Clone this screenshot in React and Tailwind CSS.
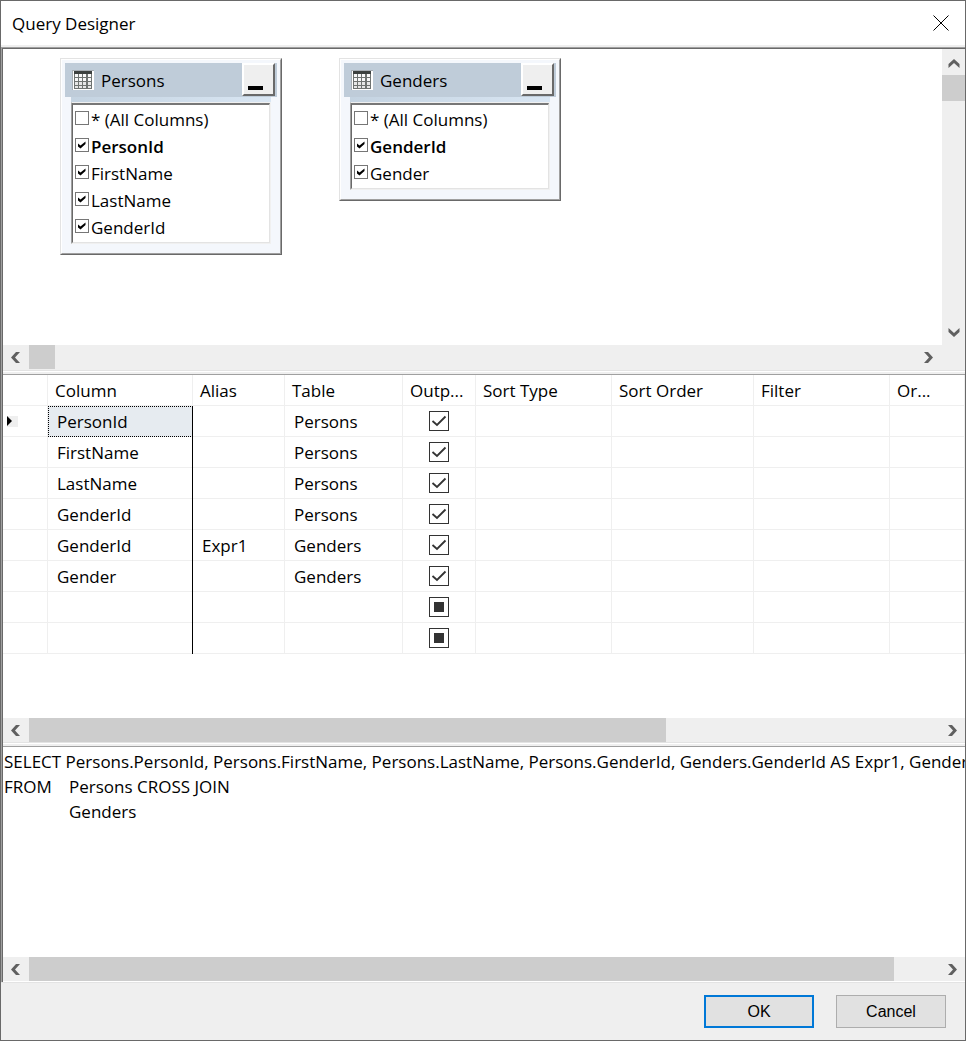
import React from "react";

const tables = [
  {
    name: "Persons",
    columns: [
      { name: "* (All Columns)", checked: false },
      { name: "PersonId", checked: true, bold: true },
      { name: "FirstName", checked: true },
      { name: "LastName", checked: true },
      { name: "GenderId", checked: true },
    ],
  },
  {
    name: "Genders",
    columns: [
      { name: "* (All Columns)", checked: false },
      { name: "GenderId", checked: true, bold: true },
      { name: "Gender", checked: true },
    ],
  },
];

const headers = [
  { label: "", width: "w-[45px]" },
  { label: "Column", width: "w-[145px]" },
  { label: "Alias", width: "w-[92px]" },
  { label: "Table", width: "w-[118px]" },
  { label: "Outp...", width: "w-[73px]" },
  { label: "Sort Type", width: "w-[136px]" },
  { label: "Sort Order", width: "w-[142px]" },
  { label: "Filter", width: "w-[136px]" },
  { label: "Or...", width: "" },
];

const rows = [
  { column: "PersonId", alias: "", table: "Persons", output: true },
  { column: "FirstName", alias: "", table: "Persons", output: true },
  { column: "LastName", alias: "", table: "Persons", output: true },
  { column: "GenderId", alias: "", table: "Persons", output: true },
  { column: "GenderId", alias: "Expr1", table: "Genders", output: true },
  { column: "Gender", alias: "", table: "Genders", output: true },
  { column: "", alias: "", table: "", output: false },
  { column: "", alias: "", table: "", output: false },
];

const sql =
  "SELECT Persons.PersonId, Persons.FirstName, Persons.LastName, Persons.GenderId, Genders.GenderId AS Expr1, Genders.Gender\n" +
  "FROM\tPersons CROSS JOIN\n" +
  "\tGenders";

const arrows = {
  left: "M10 1H6L1 6.5L6 12H10L5 6.5Z",
  right: "M2 1H6L11 6.5L6 12H2L7 6.5Z",
  up: "M0.500 12V8L6 3L11.500 8V12L6 7Z",
  down: "M0.500 2V6L6 11L11.500 6V2L6 7Z",
};

const ArrowButton = ({ dir }) => (
  <button
    type="button"
    aria-label={`Scroll ${dir}`}
    className="flex h-6 w-[26px] shrink-0 items-center justify-center"
  >
    <svg width="12" height="13" viewBox="0 0 12 13" fill="#606060">
      <path d={arrows[dir]} />
    </svg>
  </button>
);

const HScroll = ({ thumb }) => (
  <div className="flex h-6 min-w-0 grow bg-[#efefef]">
    <ArrowButton dir="left" />
    <div className="grow">
      <div className={`h-6 bg-[#cdcdcd] ${thumb}`} />
    </div>
    <ArrowButton dir="right" />
  </div>
);

const Splitter = () => (
  <div className="h-[5px] shrink-0 border-t border-b border-t-[#e3e3e3] border-b-[#a0a0a0] bg-[#efefef]">
    <div className="h-px bg-white" />
  </div>
);

const TableIcon = () => (
  <svg width="22" height="20" viewBox="0 0 22 20" shapeRendering="crispEdges">
    <rect width="22" height="20" fill="#a6adb3" />
    <rect x="1" y="1" width="21" height="19" fill="#fff" />
    <rect x="2" y="1" width="18" height="18" fill="#6f7371" />
    <rect x="2" y="1" width="18" height="3" fill="#3c403e" />
    {[4, 8, 12, 16].map((y) =>
      [3, 7, 11, 16].map((x) => (
        <rect
          key={`${x}-${y}`}
          x={x}
          y={y}
          width="3"
          height={y === 16 ? 2 : 3}
          fill={y > 8 ? "#e6e6e6" : "#f8f8f8"}
        />
      ))
    )}
  </svg>
);

const TableCard = ({ table }) => (
  <section className="w-[222px] border border-t-[#e3e3e3] border-r-[#696969] border-b-[#696969] border-l-[#e3e3e3]">
    <div className="border border-t-white border-r-[#a0a0a0] border-b-[#a0a0a0] border-l-white bg-[#f4f7fc] px-[3px] pt-[3px] pb-[9px]">
      <div className="flex h-[34px] items-start bg-[#bfccd9] pr-0.5 pl-[7px]">
        <div className="flex h-[34px] grow items-center gap-[7px]">
          <TableIcon />
          <h2>{table.name}</h2>
        </div>
        <button
          type="button"
          aria-label={`Minimize ${table.name}`}
          className="flex h-[33px] w-[33px] items-end border-2 border-t-white border-r-[#696969] border-b-[#696969] border-l-white bg-[#efefef] pb-1 pl-1"
        >
          <span className="h-1 w-[15px] bg-black" />
        </button>
      </div>
      <div className="mx-1.5 h-[5px] bg-linear-to-r from-[#c4d3e1] to-[#d9e6f3]" />
      <div className="mx-1.5 border border-t-[#f0f0f0] border-r-[#f0f0f0] border-b-[#f0f0f0] border-l-[#a0a0a0]">
        <ul className="border border-t-2 border-t-[#777777] border-r-[#e3e3e3] border-b-[#e3e3e3] border-l-[#696969] bg-white pt-px pb-px pl-0.5">
          {table.columns.map((col) => (
            <li key={col.name}>
              <label className="flex h-[27px] items-center gap-0.5">
                <span className="mb-1 grid">
                  <input
                    type="checkbox"
                    defaultChecked={col.checked}
                    className="peer col-start-1 row-start-1 h-3.5 w-3.5 appearance-none border border-[#767676] bg-white"
                  />
                  <svg
                    viewBox="0 0 14 14"
                    fill="#000"
                    className="pointer-events-none invisible col-start-1 row-start-1 h-3.5 w-3.5 peer-checked:visible"
                  >
                    <path d="M3 5.500L5.500 7.500L10.500 3.500V6L5.500 10.500L3 8.500Z" />
                  </svg>
                </span>
                <span className={col.bold ? "font-semibold" : ""}>
                  {col.name}
                </span>
              </label>
            </li>
          ))}
        </ul>
      </div>
    </div>
  </section>
);

const OutputCheckbox = ({ checked, label }) => (
  <span className="mx-auto grid w-5">
    <input
      type="checkbox"
      aria-label={label}
      defaultChecked={checked}
      className="col-start-1 row-start-1 h-5 w-5 appearance-none border border-[#333333] bg-white"
    />
    <svg
      viewBox="0 0 20 20"
      className="pointer-events-none col-start-1 row-start-1 h-5 w-5"
    >
      {checked ? (
        <path
          d="M3.500 10L8 14L16.500 5.500"
          fill="none"
          stroke="#333333"
          strokeWidth="1.8"
        />
      ) : (
        <rect x="5" y="5" width="10" height="10" fill="#333333" />
      )}
    </svg>
  </span>
);

const cell = "h-[31px] border-r border-b border-[#efefef] p-0 pl-[9px]";

const App = () => {
  return (
    <div className="flex h-screen min-h-[800px] flex-col overflow-hidden border border-[#696969] bg-[#efefef] font-['Open_Sans','Noto_Sans',sans-serif] text-[17px] leading-[25px] text-black">
      <header className="flex h-11 shrink-0 items-center justify-between bg-white pr-4 pl-[11px]">
        <h1>Query Designer</h1>
        <button type="button" aria-label="Close">
          <svg width="16" height="16" viewBox="0 0 16 16" stroke="#000">
            <path d="M0.500 0.500L15.500 15.500M15.500 0.500L0.500 15.500" />
          </svg>
        </button>
      </header>

      <main className="mt-0.5 flex min-h-0 grow flex-col border-t border-l border-[#a0a0a0]">
        <div className="flex min-h-0 grow flex-col border-t border-l border-[#696969] bg-white">
          {/* diagram */}
          <div className="flex min-h-0 flex-[326] flex-col bg-[#efefef]">
            <div className="flex min-h-0 grow">
              <div className="flex grow items-start gap-[57px] overflow-hidden bg-white pt-[9px] pl-[57px]">
                {tables.map((table) => (
                  <TableCard key={table.name} table={table} />
                ))}
              </div>
              <div className="flex w-[23px] shrink-0 flex-col items-center bg-[#efefef]">
                <div className="flex h-[26px] items-center">
                  <ArrowButton dir="up" />
                </div>
                <div className="w-full grow">
                  <div className="h-[26px] bg-[#cdcdcd]" />
                </div>
                <div className="flex h-[26px] items-center">
                  <ArrowButton dir="down" />
                </div>
              </div>
            </div>
            <div className="mb-px flex pr-6">
              <HScroll thumb="w-[26px]" />
            </div>
            <Splitter />
          </div>

          {/* criteria grid */}
          <div className="flex min-h-0 flex-[372] flex-col">
            <div className="min-h-0 grow overflow-hidden">
              <table className="w-full table-fixed border-separate border-spacing-0 text-left">
                <thead>
                  <tr>
                    {headers.map((h) => (
                      <th
                        key={h.label}
                        className={`h-[31px] border-r border-b border-[#efefef] p-0 pl-[7px] font-normal whitespace-nowrap ${h.width}`}
                      >
                        {h.label}
                      </th>
                    ))}
                  </tr>
                </thead>
                <tbody>
                  {rows.map((row, idx) => (
                    <tr key={idx}>
                      <td className="h-[31px] border-r border-b border-[#efefef] p-0 pl-1">
                        {idx === 0 && (
                          <div className="flex h-[11px] w-[11px] items-center bg-[#efefef]">
                            <svg width="5" height="10" viewBox="0 0 5 10">
                              <path d="M0 0L5 5L0 10Z" />
                            </svg>
                          </div>
                        )}
                      </td>
                      <td
                        className={
                          idx === 0
                            ? "h-[31px] border border-dotted border-black bg-[#e6ebf0] p-0 pl-2 [border-right-style:solid]"
                            : "h-[31px] p-0 pl-[9px] shadow-[inset_-1px_0_0_#000,inset_0_-1px_0_#efefef]"
                        }
                      >
                        {row.column}
                      </td>
                      <td className={cell}>{row.alias}</td>
                      <td className={cell}>{row.table}</td>
                      <td className="h-[31px] border-r border-b border-[#efefef] p-0">
                        <OutputCheckbox
                          checked={row.output}
                          label={`Output row ${idx + 1}`}
                        />
                      </td>
                      <td className={cell}></td>
                      <td className={cell}></td>
                      <td className={cell}></td>
                      <td className={cell}></td>
                    </tr>
                  ))}
                </tbody>
              </table>
            </div>
            <div className="flex">
              <HScroll thumb="w-[70%]" />
            </div>
            <Splitter />
          </div>

          {/* sql */}
          <div className="flex min-h-0 flex-[235] flex-col">
            <textarea
              aria-label="SQL statement"
              wrap="off"
              spellCheck={false}
              defaultValue={sql}
              className="min-h-0 w-full grow resize-none overflow-hidden bg-white pt-0.5 pl-px whitespace-pre outline-none [tab-size:65px]"
            />
            <div className="mb-px flex">
              <HScroll thumb="w-[95%]" />
            </div>
          </div>
        </div>
      </main>

      <footer className="flex shrink-0 justify-end gap-[22px] border-t border-[#e3e3e3] bg-[#efefef] pt-3 pr-[19px] pb-3 font-['Liberation_Sans',Arial,sans-serif] text-base">
        <button
          type="button"
          className="h-[33px] w-[110px] border-2 border-[#0078d7] bg-[#e1e1e1]"
        >
          OK
        </button>
        <button
          type="button"
          className="h-[33px] w-[110px] border border-[#adadad] bg-[#e1e1e1]"
        >
          Cancel
        </button>
      </footer>
    </div>
  );
};

export default App;
